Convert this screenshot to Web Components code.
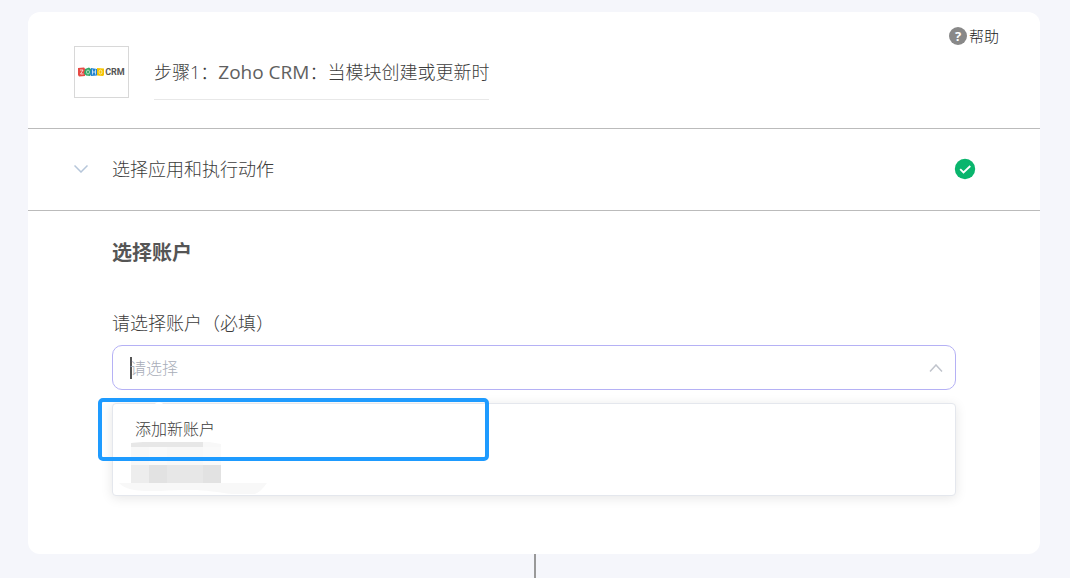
<!DOCTYPE html>
<html lang="zh-CN">
<head>
<meta charset="utf-8">
<title>步骤1：Zoho CRM</title>
<style>
  html, body { margin: 0; min-height: 100%; }
  body {
    background: #f5f6fb;
    color: #3c3c3c;
    font-family: "Open Sans", "Noto Sans CJK SC", sans-serif;
    font-weight: 300;
    overflow: hidden;
  }
  .app-name { color: #606060; font-size: 19px; line-height: 24px; font-weight: 400; }
</style>
</head>
<body>
<step-card>
  <step-header slot="header"><span>步骤1：<span class="app-name">Zoho CRM</span>：当模块创建或更新时</span></step-header>
  <step-summary>选择应用和执行动作</step-summary>
  <step-panel heading="选择账户">
    <account-select label="请选择账户（必填）" placeholder="请选择">添加新账户</account-select>
  </step-panel>
</step-card>
<step-connector></step-connector>

<script>
const define = (name, html, init) => {
  const template = document.createElement('template');
  template.innerHTML = html;
  customElements.define(name, class extends HTMLElement {
    connectedCallback() {
      if (this.shadowRoot) return;
      this.attachShadow({ mode: 'open' }).append(template.content.cloneNode(true));
      if (init) init(this, this.shadowRoot);
    }
  });
};

define('step-card', `
  <style>
    :host { display: block; margin: 12px 30px 0 28px; background: #fff; border-radius: 12px; }
  </style>
  <slot name="header"></slot>
  <slot></slot>`);

define('zoho-logo', `
  <style>
    :host { display: flex; flex: none; align-items: center; justify-content: center; box-sizing: border-box;
      width: 55px; height: 52px; border: 1px solid #d8d8d8; background: #fff; }
    .logo { display: flex; align-items: center; color: #555; font: bold 9px/10px Roboto, sans-serif; }
    svg { display: block; }
  </style>
  <span class="logo">
    <svg width="27" height="10" viewBox="0 0 27 10" aria-hidden="true">
      <path d="M0 1l6-.5 1 1V9L1 9.500 0 8z" fill="#e64a45"/>
      <path d="M7 2l4-1.500L14 3l-2 6-4-.5-2-2z" fill="#2fa866"/>
      <path d="M13 1l6 1v6.500L13 9l-1-2z" fill="#2384cf"/>
      <path d="M19 1l7 .5V8l-1 1-6-.5z" fill="#f5c400"/>
      <path d="M2 3h3L2.500 7H5.500M14.500 2.500v5M17.500 2.500v5M14.500 5h3" fill="none" stroke="#fff" stroke-opacity=".7"/>
      <ellipse cx="10" cy="5" rx="1.500" ry="2" fill="none" stroke="#fff" stroke-opacity=".6"/>
      <ellipse cx="22.500" cy="5" rx="1.500" ry="2" fill="none" stroke="#fff" stroke-opacity=".6"/>
    </svg>
    <span>CRM</span>
  </span>`);

define('help-link', `
  <style>
    :host { display: block; }
    a { display: flex; align-items: center; gap: 2px; color: #222; font-size: 15px; line-height: 20px; text-decoration: none; }
    i { display: block; width: 18px; height: 18px; border-radius: 50%; background: #888; color: #fff;
      font: bold 13px/18px "Open Sans", sans-serif; text-align: center; }
  </style>
  <a href="#help"><i>?</i><slot></slot></a>`);

define('step-header', `
  <style>
    :host { display: flex; box-sizing: border-box; height: 117px; padding: 14px 41px 0 46px; border-bottom: 1px solid #bbb; }
    zoho-logo { margin: 20px 25px 0 0; }
    h1 { height: 54px; box-sizing: border-box; margin: 20px auto 0 0; padding-top: 12px; border-bottom: 1px solid #e8e8e8;
      font-size: 18px; font-weight: inherit; line-height: 28px; white-space: nowrap; }
    ::slotted(span) { display: block; }
  </style>
  <zoho-logo></zoho-logo>
  <h1><slot></slot></h1>
  <help-link>帮助</help-link>`);

define('step-summary', `
  <style>
    :host { display: block; border-bottom: 1px solid #bbb; }
    button { display: flex; align-items: center; width: 100%; height: 81px; box-sizing: border-box; border: 0;
      padding: 0 64px 2px 46px; background: none; color: inherit; font: inherit; font-size: 18px; line-height: 24px; text-align: left; }
    .text { flex: 1; padding-left: 24px; }
    svg { display: block; }
  </style>
  <button type="button" aria-expanded="false">
    <svg width="14" height="8" viewBox="0 0 14 8" fill="none" stroke="#b6c6da" stroke-width="1.500" aria-hidden="true"><path d="M.5.5L7 7 13.500.5"/></svg>
    <span class="text"><slot></slot></span>
    <svg width="22" height="22" viewBox="0 0 22 22" role="img" aria-label="已完成"><circle cx="11" cy="11" r="10.200" fill="#0ab56d"/><path d="M6.200 11.200l3.300 3.300 6.800-6.500" fill="none" stroke="#fff" stroke-width="1.800"/></svg>
  </button>`);

define('step-panel', `
  <style>
    :host { display: block; padding: 28px 84px 58px; }
    h2 { margin: 0 0 44px; color: #555; font-size: 20px; line-height: 28px; font-weight: 700; }
  </style>
  <h2></h2>
  <slot></slot>`, (host, root) => {
  root.querySelector('h2').textContent = host.getAttribute('heading');
});

define('masked-account', `
  <style>:host, svg { display: block; }</style>
  <svg width="150" height="54" viewBox="0 0 150 54" aria-hidden="true">
    <path d="M0 43h148c-4 5-8 11-16 12-16 1-38-5-60-5-24-1-60 6-72-7z" fill="#f8f8f8"/>
    <path d="M12 3l20-1h58l12 2v3H12z" fill="#f8f8f8"/>
    <path d="M12 3l12-1h60v5H12z" fill="#e7e7e7"/>
    <path d="M12 7h90v18H12z" fill="#f8f8f8"/>
    <path d="M30 7h18v18H30zM84 7h18v18H84z" fill="#fafafa"/>
    <path d="M12 25h18v18H12z" fill="#ededed"/>
    <path d="M30 25h18v18H30z" fill="#e2e2e2"/>
    <path d="M48 25h36v18H48z" fill="#e7e7e7"/>
    <path d="M84 25h18v18H84z" fill="#e2e2e2"/>
  </svg>`);

define('account-select', `
  <style>
    :host { display: block; }
    label { display: block; margin-bottom: 10px; font-size: 18px; line-height: 24px; }
    .field { display: flex; align-items: center; box-sizing: border-box; height: 45px; padding: 0 12px 0 17px;
      border: 1px solid #b5b1f5; border-radius: 10px; background: #fff; }
    .caret { width: 2px; height: 22px; margin-right: -2px; background: #555; }
    input { flex: 1; min-width: 0; border: 0; outline: 0; padding: 0; background: none; color: #555; font: inherit; font-size: 16px; line-height: 24px; }
    input::placeholder { color: #a8adb8; opacity: 1; }
    .menu { position: relative; box-sizing: border-box; height: 93px; margin-top: 13px; padding-top: 9px;
      border: 1px solid #e4e7ed; border-radius: 4px; background: #fff; box-shadow: 0 2px 12px rgba(0,0,0,.1); }
    .arrow { position: absolute; left: 40px; top: -2px; }
    .option { display: block; width: 100%; border: 0; padding: 0 22px; background: none; color: inherit;
      font: inherit; font-size: 16px; line-height: 32px; text-align: left; }
    masked-account { position: absolute; left: 6px; top: 36px; }
    .highlight { position: absolute; left: -15px; top: -6px; width: 391px; height: 63px; box-sizing: border-box;
      border: 4px solid #1e9bff; border-radius: 5px; pointer-events: none; }
    svg { display: block; }
  </style>
  <label for="account"></label>
  <div class="field">
    <span class="caret"></span>
    <input id="account" type="text" role="combobox" aria-expanded="true" aria-controls="menu" autocomplete="off">
    <svg width="14" height="8" viewBox="0 0 14 8" fill="none" stroke="#c0c4cc" stroke-width="1.500" aria-hidden="true"><path d="M1 7.500L7 1l6 6.500"/></svg>
  </div>
  <div class="menu" id="menu">
    <svg class="arrow" width="12" height="3" aria-hidden="true"><path d="M0 3l5-3h2l5 3z" fill="#fff"/></svg>
    <masked-account></masked-account>
    <button class="option" type="button"><slot></slot></button>
    <span class="highlight"></span>
  </div>`, (host, root) => {
  root.querySelector('label').textContent = host.getAttribute('label');
  root.querySelector('input').placeholder = host.getAttribute('placeholder');
});

define('step-connector', `
  <style>:host { display: block; width: 2px; height: 24px; margin: 0 auto; background: #999; }</style>`);
</script>
</body>
</html>
